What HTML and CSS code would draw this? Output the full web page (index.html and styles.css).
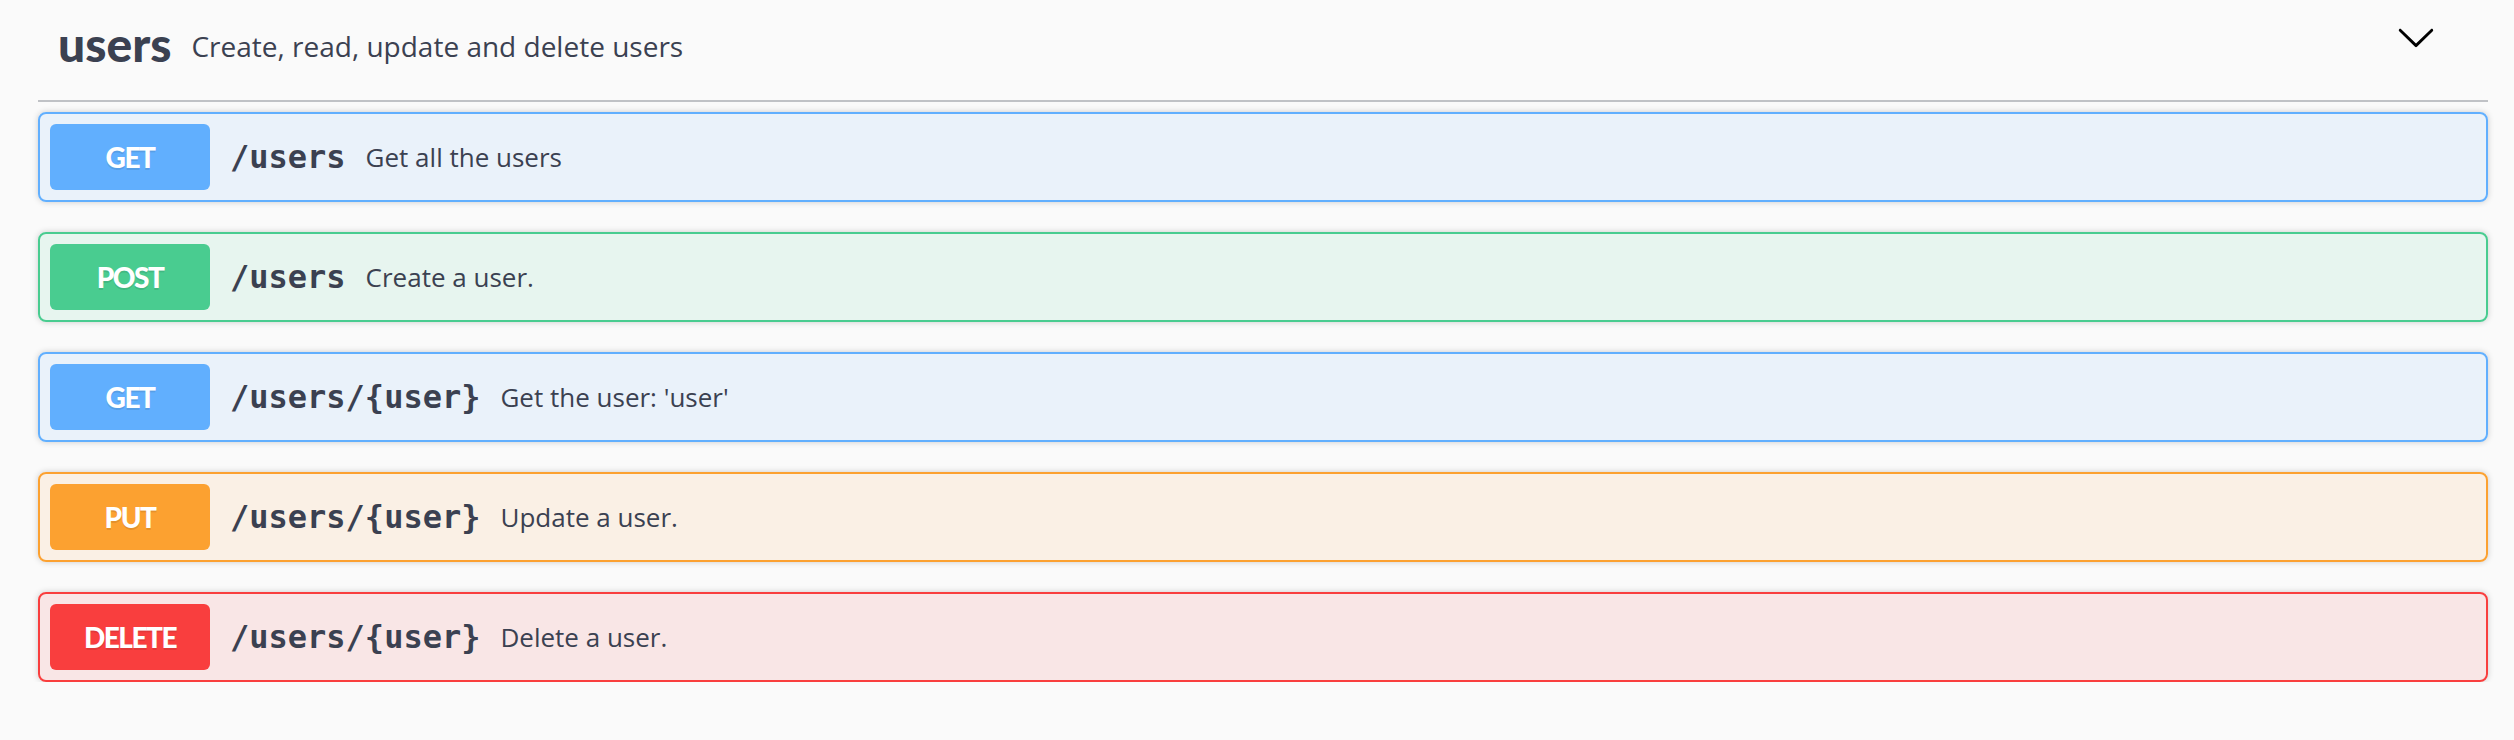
FILE: index.html
```html
<!DOCTYPE html>
<html lang="en">
<head>
<meta charset="utf-8">
<title>users</title>
<link rel="stylesheet" href="styles.css">
</head>
<body>
<div class="wrapper">
  <section class="tag-section">
    <div class="tag">
      <span class="tag-name">users</span>
      <small class="tag-desc">Create, read, update and delete users</small>
      <button class="expand" type="button" aria-label="collapse">
        <svg width="40" height="40" viewBox="0 0 20 20" aria-hidden="true"><path d="M17.418 6.109c.272-.268.709-.268.979 0s.271.701 0 .969l-7.908 7.83c-.27.268-.707.268-.979 0l-7.908-7.830c-.27-.268-.27-.701 0-.969.271-.268.709-.268.979 0L10 13.25l7.418-7.141z"/></svg>
      </button>
    </div>
    <div class="ops">
      <div class="op op-get">
        <span class="method">GET</span>
        <span class="path">/users</span>
        <span class="summary">Get all the users</span>
      </div>
      <div class="op op-post">
        <span class="method">POST</span>
        <span class="path">/users</span>
        <span class="summary">Create a user.</span>
      </div>
      <div class="op op-get">
        <span class="method">GET</span>
        <span class="path">/users/{user}</span>
        <span class="summary">Get the user: 'user'</span>
      </div>
      <div class="op op-put">
        <span class="method">PUT</span>
        <span class="path">/users/{user}</span>
        <span class="summary">Update a user.</span>
      </div>
      <div class="op op-delete">
        <span class="method">DELETE</span>
        <span class="path">/users/{user}</span>
        <span class="summary">Delete a user.</span>
      </div>
    </div>
  </section>
</div>
</body>
</html>
```

FILE: styles.css
```css
* { box-sizing: border-box; }

html, body {
  margin: 0;
  padding: 0;
  background: #fafafa;
}

body {
  font-family: "Open Sans", sans-serif;
  color: #3b4151;
}

.wrapper {
  padding: 0 26px 0 38px;
}

.tag {
  display: flex;
  align-items: center;
  padding: 15px 40px 27px 20px;
  border-bottom: 2px solid rgba(59, 65, 81, 0.3);
  margin-bottom: 10px;
}

.tag-name {
  font-family: Lato, "Open Sans", sans-serif;
  font-weight: 900;
  font-size: 48px;
  line-height: 58px;
  color: #3b4151;
}

.tag-desc {
  flex: 1;
  padding: 0 20px;
  margin-top: 4px;
  font-family: "Open Sans", sans-serif;
  font-size: 28px;
  line-height: 38px;
  font-weight: 400;
  color: #3b4151;
}

.expand {
  border: none;
  background: none;
  padding: 2px 12px;
  margin: 0 0 14px 0;
  display: flex;
  cursor: pointer;
}

.expand svg {
  display: block;
  fill: #000;
}

.ops {
  display: flex;
  flex-direction: column;
  gap: 30px;
}

.op {
  display: flex;
  align-items: center;
  padding: 10px;
  border: 2px solid #000;
  border-radius: 8px;
  box-shadow: 0 0 6px rgba(0, 0, 0, 0.19);
}

.method {
  width: 160px;
  padding: 12px 20px;
  border-radius: 6px;
  text-align: center;
  font-family: Lato, "Open Sans", sans-serif;
  font-weight: 900;
  font-size: 28px;
  line-height: 42px;
  letter-spacing: -1.5px;
  color: #fff;
  text-shadow: 0 2px 0 rgba(0, 0, 0, 0.1);
}

.path {
  padding: 0 20px;
  font-family: "DejaVu Sans Mono", "Liberation Mono", monospace;
  font-weight: 700;
  font-size: 32px;
  color: #3b4151;
}

.summary {
  flex: 1;
  font-family: "Open Sans", sans-serif;
  font-size: 26px;
  color: #3b4151;
}

.op-get { border-color: #61affe; background: rgba(97, 175, 254, 0.1); }
.op-get .method { background: #61affe; }

.op-post { border-color: #49cc90; background: rgba(73, 204, 144, 0.1); }
.op-post .method { background: #49cc90; }

.op-put { border-color: #fca130; background: rgba(252, 161, 48, 0.1); }
.op-put .method { background: #fca130; }

.op-delete { border-color: #f93e3e; background: rgba(249, 62, 62, 0.1); }
.op-delete .method { background: #f93e3e; }
```
